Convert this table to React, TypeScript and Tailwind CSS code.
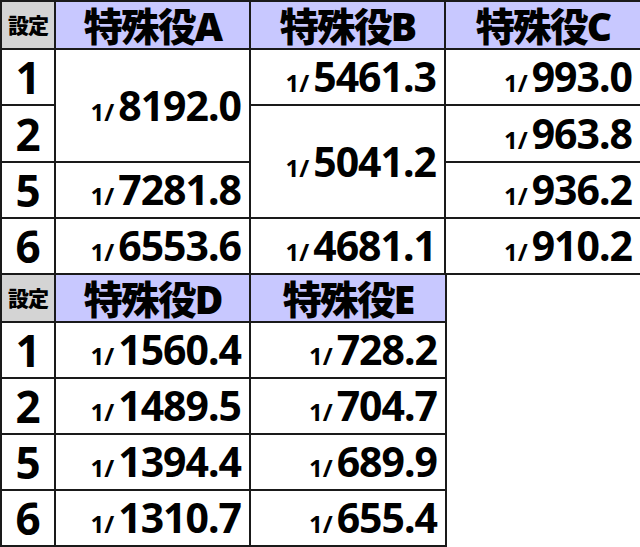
const font = { fontFamily: '"Noto Sans", "Noto Sans CJK JP", sans-serif' };

function Val({ v }: { v: string }) {
    return (
        <span className="whitespace-nowrap font-bold leading-none">
            <span className="text-[24px] mr-[4px]">1/</span>
            <span className="text-[41px] tracking-[-1px]">{v}</span>
        </span>
    );
}

const cell = "border-2 border-[#1a1a1a] text-right pr-[8px] align-middle bg-white";
const head = "border-2 border-[#1a1a1a] bg-[#c8c8ff] text-center text-[39px] font-black leading-none tracking-[-2px]";
const setHead = "border-2 border-[#1a1a1a] bg-[#d4d4d4] text-center text-[21px] font-black leading-none tracking-[-1px]";
const setCell = "border-2 border-[#1a1a1a] bg-white text-center text-[44px] font-bold leading-none";

export default function App() {
    return (
        <div className="w-[640px] h-[547px] bg-white overflow-hidden text-black" style={font}>
            {/* top table: A, B, C */}
            <table className="border-collapse table-fixed w-[640px]">
                <colgroup>
                    <col className="w-[54px]" />
                    <col className="w-[195px]" />
                    <col className="w-[195px]" />
                    <col className="w-[196px]" />
                </colgroup>
                <tbody>
                    <tr className="h-[48px]">
                        <td className={setHead}>設定</td>
                        <td className={head}>特殊役A</td>
                        <td className={head}>特殊役B</td>
                        <td className={head}>特殊役C</td>
                    </tr>
                    <tr className="h-[56px]">
                        <td className={setCell}>1</td>
                        <td className={cell} rowSpan={2}><Val v="8192.0" /></td>
                        <td className={cell}><Val v="5461.3" /></td>
                        <td className={cell}><Val v="993.0" /></td>
                    </tr>
                    <tr className="h-[57px]">
                        <td className={setCell}>2</td>
                        <td className={cell} rowSpan={2}><Val v="5041.2" /></td>
                        <td className={cell}><Val v="963.8" /></td>
                    </tr>
                    <tr className="h-[56px]">
                        <td className={setCell}>5</td>
                        <td className={cell}><Val v="7281.8" /></td>
                        <td className={cell}><Val v="936.2" /></td>
                    </tr>
                    <tr className="h-[56px]">
                        <td className={setCell}>6</td>
                        <td className={cell}><Val v="6553.6" /></td>
                        <td className={cell}><Val v="4681.1" /></td>
                        <td className={cell}><Val v="910.2" /></td>
                    </tr>
                </tbody>
            </table>

            {/* bottom table: D, E */}
            <table className="border-collapse table-fixed w-[445px] -mt-[2px]">
                <colgroup>
                    <col className="w-[54px]" />
                    <col className="w-[195px]" />
                    <col className="w-[196px]" />
                </colgroup>
                <tbody>
                    <tr className="h-[48px]">
                        <td className={setHead}>設定</td>
                        <td className={head}>特殊役D</td>
                        <td className={head}>特殊役E</td>
                    </tr>
                    {[
                        ["1", "1560.4", "728.2"],
                        ["2", "1489.5", "704.7"],
                        ["5", "1394.4", "689.9"],
                        ["6", "1310.7", "655.4"],
                    ].map(([s, d, e]) => (
                        <tr key={s} className="h-[56px]">
                            <td className={setCell}>{s}</td>
                            <td className={cell}><Val v={d} /></td>
                            <td className={cell}><Val v={e} /></td>
                        </tr>
                    ))}
                </tbody>
            </table>
        </div>
    );
}
